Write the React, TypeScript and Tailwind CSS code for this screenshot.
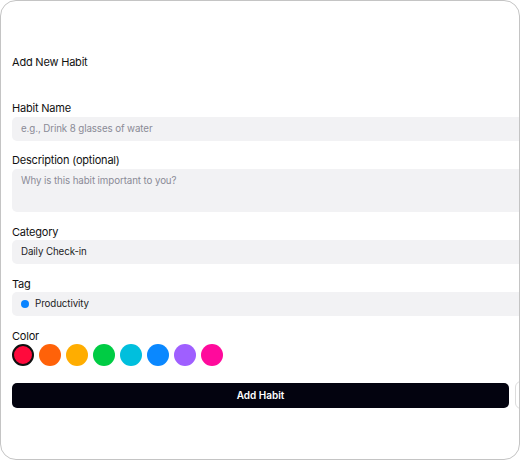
import React from "react";

const colors = ["#ff0a3c", "#ff6209", "#ffad00", "#00cc44", "#00bfdd", "#0a88ff", "#9f5fff", "#ff0a9c"];

function Label({ children }: { children: React.ReactNode }) {
  return <div className="h-[16px] leading-[16px] text-[11px] tracking-[-0.2px] text-[#111]">{children}</div>;
}

export default function App() {
  return (
    <div className="w-[520px] h-[460px] bg-white" style={{ fontFamily: "Inter, 'Noto Sans', sans-serif" }}>
      <div className="w-[520px] h-[460px] rounded-[16px] border border-[#c4c4c4] overflow-hidden bg-white">
        <div className="pl-[11px] pt-[53px] w-[600px] flex flex-col">
          <div className="h-[16px] leading-[16px] text-[11px] tracking-[-0.2px] text-[#111]">Add New Habit</div>

          <div className="mt-[30px]">
            <Label>Habit Name</Label>
            <div className="mt-[1px] h-[24px] w-[560px] rounded-[5px] bg-[#f2f2f4] flex items-center pl-[9px] text-[9.75px] tracking-[-0.1px] text-[#8a8a96]">
              e.g., Drink 8 glasses of water
            </div>
          </div>

          <div className="mt-[11px]">
            <Label>Description (optional)</Label>
            <div className="mt-[1px] h-[43px] w-[560px] rounded-[5px] bg-[#f2f2f4] pl-[9px] pt-[5px] leading-[14px] text-[9.75px] tracking-[-0.1px] text-[#8a8a96]">
              Why is this habit important to you?
            </div>
          </div>

          <div className="mt-[12px]">
            <Label>Category</Label>
            <div className="h-[24px] w-[560px] rounded-[5px] bg-[#f2f2f4] flex items-center pl-[9px] text-[9.75px] tracking-[-0.1px] text-[#1c1c1e]">
              Daily Check-in
            </div>
          </div>

          <div className="mt-[12px]">
            <Label>Tag</Label>
            <div className="h-[24px] w-[560px] rounded-[5px] bg-[#f2f2f4] flex items-center pl-[9px] gap-[6px] text-[9.75px] tracking-[-0.1px] text-[#1c1c1e]">
              <span className="w-[8px] h-[8px] rounded-full bg-[#0a84ff]" />
              <span>Productivity</span>
            </div>
          </div>

          <div className="mt-[12px]">
            <Label>Color</Label>
            <div className="flex gap-[5px]">
              {colors.map((c, i) => (
                <span
                  key={c}
                  className={
                    i === 0
                      ? "w-[22px] h-[22px] rounded-full border-2 border-[#111] box-border"
                      : "w-[22px] h-[22px] rounded-full"
                  }
                  style={{ backgroundColor: c }}
                />
              ))}
            </div>
          </div>

          <div className="mt-[15px] flex items-center gap-[6px]">
            <div className="h-[25px] w-[497px] rounded-[5px] bg-[#03030f] flex items-center justify-center text-white text-[10px] font-semibold">
              Add Habit
            </div>
            <div className="h-[28px] w-[60px] rounded-[6px] border border-[#dcdcdc] bg-white" />
          </div>
        </div>
      </div>
    </div>
  );
}
